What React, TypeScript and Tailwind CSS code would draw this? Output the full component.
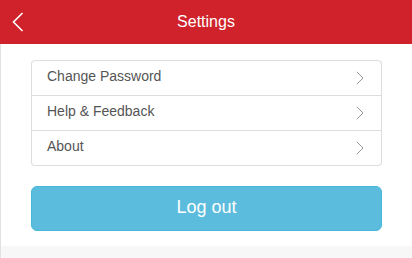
const items = ["Change Password", "Help & Feedback", "About"];

function Chevron({ className }: { className?: string }) {
  return (
    <svg width="8" height="14" viewBox="0 0 8 14" className={className} fill="none">
      <path d="M0.8 0.8 L7 7 L0.8 13.2" stroke="currentColor" strokeWidth="1" />
    </svg>
  );
}

export default function App() {
  return (
    <div className="w-[412px] h-[258px] flex flex-col bg-[#f7f7f7] font-['Liberation_Sans',Arial,sans-serif] overflow-hidden">
      <header className="relative h-[44px] bg-[#d0222b] flex items-center justify-center shrink-0 pb-[1px]">
        <svg
          width="12"
          height="20"
          viewBox="0 0 12 20"
          className="absolute left-[12px] top-[12px] text-white"
          fill="none"
        >
          <path d="M10.5 1 L1.5 10 L10.5 19" stroke="currentColor" strokeWidth="1.6" />
        </svg>
        <h1 className="text-white text-[16px] leading-none">Settings</h1>
      </header>

      <main className="bg-white border-l border-[#e2e2e2] pt-4 pb-[15px] px-[30px] flex flex-col gap-[20px]">
        <ul className="border-x border-b border-[#dddddd] rounded-[4px] bg-white">
          {items.map((label, i) => (
            <li
              key={label}
              className={`h-[35px] flex items-center justify-between pl-[15px] pr-[17px] border-t border-[#dddddd] text-[14px] text-[#555555] ${
                i === 0 ? "rounded-t-[4px]" : ""
              }`}
            >
              <span className="pb-[3px]">{label}</span>
              <Chevron className="text-[#999999]" />
            </li>
          ))}
        </ul>

        <button className="h-[45px] rounded-[6px] bg-[#5bbcdd] border border-[#46b8da] text-white text-[18px] pb-[3px]">
          Log out
        </button>
      </main>

      <div className="flex-1 border-l border-[#e2e2e2]" />
    </div>
  );
}
